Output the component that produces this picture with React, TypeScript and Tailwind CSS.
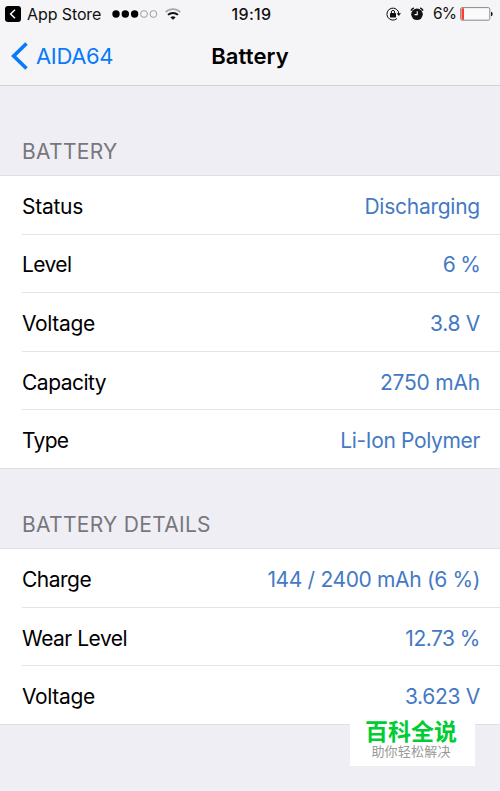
import clsx from "clsx";

type TRow = { label: string; value: string; labelClass?: string; valueClass?: string };

const battery: TRow[] = [
  { label: "Status", value: "Discharging", labelClass: "tracking-[-0.25px]", valueClass: "tracking-[-0.25px]" },
  { label: "Level", value: "6 %", labelClass: "tracking-[-0.6px]", valueClass: "tracking-[-0.8px]" },
  { label: "Voltage", value: "3.8 V", valueClass: "tracking-[-0.3px]" },
  { label: "Capacity", value: "2750 mAh", labelClass: "tracking-[-0.5px]", valueClass: "tracking-[-0.2px]" },
  { label: "Type", value: "Li-Ion Polymer", labelClass: "tracking-[-0.7px]" },
];

const details: TRow[] = [
  { label: "Charge", value: "144 / 2400 mAh (6 %)", labelClass: "tracking-[-0.5px]" },
  { label: "Wear Level", value: "12.73 %", labelClass: "tracking-[-0.5px]", valueClass: "tracking-[-0.5px]" },
  { label: "Voltage", value: "3.623 V", valueClass: "tracking-[-0.3px]" },
];

const StatusBar = () => (
  <div className="grid grid-cols-3 items-center h-[27px] text-[16px] leading-none text-[#111]">
    <div className="flex items-center pl-[5px]">
      <svg className="w-4 h-4 shrink-0" viewBox="0 0 16 16" fill="none">
        <rect width="16" height="16" rx="3" fill="#000" />
        <path d="M10 3.8 5.6 8l4.4 4.2" stroke="#fff" strokeWidth="1.5" />
      </svg>
      <span className="ml-[6px] tracking-[-0.1px] whitespace-nowrap">App Store</span>
      <svg className="ml-[11px] w-[46px] h-2 shrink-0" viewBox="0 0 46 8">
        <circle cx="4" cy="4" r="3.7" />
        <circle cx="13.3" cy="4" r="3.7" />
        <circle cx="22.6" cy="4" r="3.7" />
        <circle cx="32" cy="4" r="3.4" fill="none" stroke="#888" strokeWidth="0.8" />
        <circle cx="41.4" cy="4" r="3.4" fill="none" stroke="#888" strokeWidth="0.8" />
      </svg>
      <svg className="ml-[7px] w-4 h-3 shrink-0" viewBox="0 0 16 12" fill="none">
        <path d="M.7 4.1a10.6 10.6 0 0 1 14.6 0" stroke="#aaa" strokeWidth="1.7" />
        <path d="M3 6.9a7.2 7.2 0 0 1 10 0" stroke="#111" strokeWidth="2" />
        <path d="M8 11.8 5.4 9.4a4 4 0 0 1 5.2 0z" fill="#111" />
      </svg>
    </div>
    <span className="pl-[3px] text-center font-medium tracking-[0.35px]">19:19</span>
    <div className="flex items-center justify-end pr-[7px]">
      <svg className="w-[15px] h-[14px]" viewBox="0 0 15 14" fill="none" stroke="#111">
        <path d="M12.9 6.6A6 6 0 1 0 11 11.5" strokeWidth="1" />
        <path d="m10.6 6.3 2.2 2.7L15 6.3z" fill="#111" stroke="none" />
        <rect x="4" y="6.1" width="6" height="4.4" rx=".4" fill="#111" stroke="none" />
        <path d="M5.4 6.3V5a1.600 1.600 0 0 1 3.200 0v1.300" strokeWidth="1" />
      </svg>
      <svg className="ml-[9px] w-[14px] h-[14px]" viewBox="0 0 14 14" fill="none">
        <circle cx="7" cy="7.3" r="5.8" fill="#111" />
        <path d="M1 3.6A5 5 0 0 1 3.8 1M13 3.6A5 5 0 0 0 10.2 1" stroke="#111" strokeWidth="1.5" />
        <path d="M7.2 4.2v3.400H4.600" stroke="#fff" strokeWidth="1.100" />
      </svg>
      <span className="ml-[9px] text-[15.5px] tracking-[-0.9px]">6%</span>
      <svg className="ml-[4px] w-[33px] h-[14px]" viewBox="0 0 33 14" fill="none">
        <rect x=".6" y=".6" width="29.2" height="12.6" rx="1.5" fill="#fafafa" stroke="#888" strokeWidth="1" />
        <path d="M1.500 2.200q0-.9.9-.9H4v11.400H2.400q-.9 0-.9-.9z" fill="#ff3b30" />
        <path d="M31 4.700q1.700.5 1.700 2.300T31 9.300z" fill="#111" />
      </svg>
    </div>
  </div>
);

const NavBar = () => (
  <div className="grid grid-cols-[1fr_auto_1fr] items-center h-[58px] text-[22px] leading-none">
    <div className="flex items-center pl-[11px] text-[#087bfa]">
      <svg className="w-[17px] h-7" viewBox="0 0 17 28" fill="none">
        <path d="M15.5 1.500 2.700 14l12.800 12.500" stroke="currentColor" strokeWidth="3.700" />
      </svg>
      <span className="ml-2 tracking-[-0.35px]">AIDA64</span>
    </div>
    <h1 className="font-semibold tracking-[0.1px] text-black">Battery</h1>
  </div>
);

const Row = ({ label, value, labelClass, valueClass }: TRow) => (
  <li className="flex items-center justify-between flex-1 pt-[4px] pr-5 border-b border-[#e4e4e7] last:border-b-0">
    <span className={clsx("text-black", labelClass || "tracking-[-0.35px]")}>{label}</span>
    <span className={clsx("text-[#4479c4]", valueClass || "tracking-[-0.35px]")}>{value}</span>
  </li>
);

const Section = ({ title, rows, className }: { title: string; rows: TRow[]; className: string }) => (
  <section className="text-[21px] leading-[26px]">
    <h2 className="pl-[22px] pb-[10px] text-[#77777c] tracking-[0.3px]">{title}</h2>
    <ul className={clsx("flex flex-col pl-[22px] bg-white border-y border-[#e0e0e4]", className)}>
      {rows.map((row) => (
        <Row key={row.label} {...row} />
      ))}
    </ul>
  </section>
);

const Watermark = () => (
  <div className="absolute left-[350px] top-[710px] flex flex-col items-center w-[125px] h-14 pr-[3px] bg-white font-['Noto_Sans_CJK_SC',sans-serif]">
    <span className="mt-[8px] text-[23px] leading-6 font-bold text-[#00cc33]">百科全说</span>
    <span className="text-[13px] leading-[18px] tracking-[0.2px] text-[#999]">助你轻松解决</span>
  </div>
);

export default function App() {
  return (
    <div className="relative flex flex-col w-[500px] h-[791px] overflow-hidden bg-[#efeef4] font-['Inter',sans-serif]">
      <header className="h-[86px] shrink-0 bg-[#f5f5f7] border-b border-[#d2d2d5]">
        <StatusBar />
        <NavBar />
      </header>
      <main className="flex flex-col gap-[43px] pt-[53px]">
        <Section title="BATTERY" rows={battery} className="h-[294px]" />
        <Section title="BATTERY DETAILS" rows={details} className="h-[177px]" />
      </main>
      <Watermark />
    </div>
  );
}
